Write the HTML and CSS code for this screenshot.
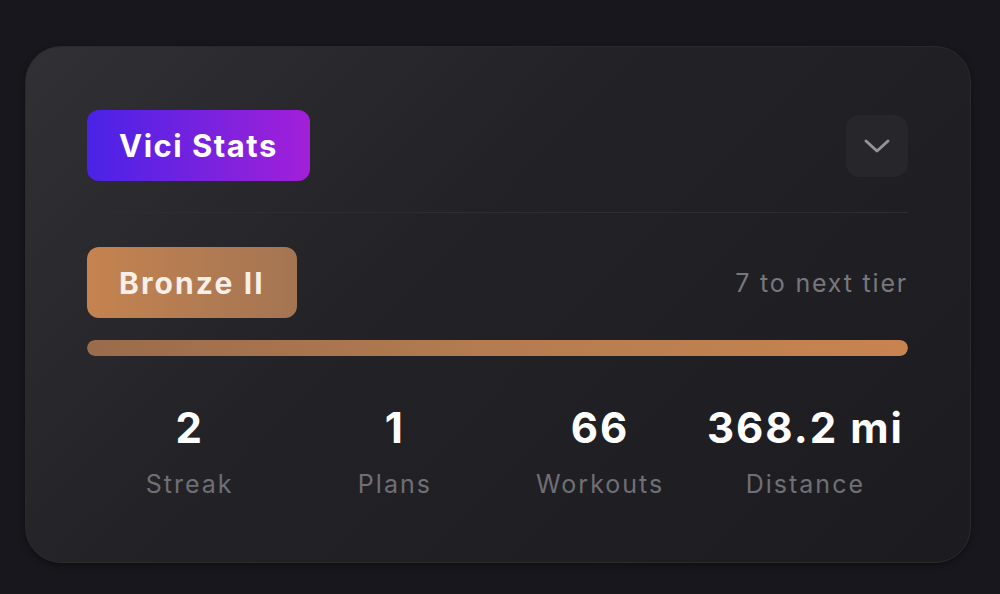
FILE: index.html
```html
<!DOCTYPE html>
<html lang="en">
<head>
    <meta charset="UTF-8">
    <meta name="viewport" content="width=device-width, initial-scale=1.0">
    <title>Vici Stats</title>
    <link rel="stylesheet" href="styles.css">
</head>
<body>
    <div class="card">
        <div class="card-header">
            <span class="brand-badge">Vici Stats</span>
            <button class="toggle" type="button" aria-label="Collapse">
                <svg width="28" height="16" viewBox="0 0 28 16" fill="none">
                    <path d="M3 3l11 10L25 3" stroke="#939399" stroke-width="3" stroke-linecap="round" stroke-linejoin="round"/>
                </svg>
            </button>
        </div>

        <div class="tier-row">
            <span class="tier-badge">Bronze II</span>
            <span class="tier-next">7 to next tier</span>
        </div>
        <div class="progress">
            <div class="progress-fill" style="width: 100%"></div>
        </div>

        <div class="stats">
            <div class="stat">
                <div class="stat-value">2</div>
                <div class="stat-label">Streak</div>
            </div>
            <div class="stat">
                <div class="stat-value">1</div>
                <div class="stat-label">Plans</div>
            </div>
            <div class="stat">
                <div class="stat-value">66</div>
                <div class="stat-label">Workouts</div>
            </div>
            <div class="stat">
                <div class="stat-value">368.2 mi</div>
                <div class="stat-label">Distance</div>
            </div>
        </div>
    </div>
</body>
</html>
```

FILE: styles.css
```css
body {
    margin: 0;
    padding: 46px 29px 0 25px;
    background-color: #17171d;
    font-family: Inter, "Noto Sans", sans-serif;
    height: 594px;
    box-sizing: border-box;
}
.card {
    height: 517px;
    box-sizing: border-box;
    padding: 63px 62px 0 61px;
    border-radius: 36px;
    background: linear-gradient(135deg, #313135 0%, #232327 40%, #1c1c20 100%);
    border: 1px solid #2a2a2e;
    box-shadow: 0 2px 6px rgba(0, 0, 0, 0.4);
}
.card-header {
    display: flex;
    justify-content: space-between;
    align-items: center;
    padding-bottom: 31px;
    border-bottom: 1px solid #2c2c31;
}
.brand-badge {
    display: inline-flex;
    align-items: center;
    height: 71px;
    padding: 0 32px;
    border-radius: 12px;
    background: linear-gradient(90deg, #4a22e8 0%, #7e22dd 60%, #a31fd9 100%);
    color: #fff;
    font-size: 31px;
    font-weight: 700;
    letter-spacing: 1.5px;
}
.toggle {
    width: 62px;
    height: 62px;
    border: none;
    border-radius: 14px;
    background-color: #26262b;
    display: flex;
    align-items: center;
    justify-content: center;
    padding: 0;
    cursor: pointer;
}
.tier-row {
    display: flex;
    justify-content: space-between;
    align-items: center;
    margin-top: 34px;
}
.tier-badge {
    display: inline-flex;
    align-items: center;
    height: 71px;
    padding: 0 32px;
    border-radius: 12px;
    background: linear-gradient(90deg, #c5834f 0%, #b07a52 60%, #a47552 100%);
    color: #f7efe8;
    font-size: 30px;
    font-weight: 700;
    letter-spacing: 2.1px;
}
.tier-next {
    color: #77777d;
    font-size: 25px;
    letter-spacing: 1.8px;
}
.progress {
    margin-top: 22px;
    height: 16px;
    border-radius: 8px;
    background-color: #2c2c31;
    overflow: hidden;
}
.progress-fill {
    height: 100%;
    border-radius: 8px;
    background: linear-gradient(90deg, #9a6c4b 0%, #b57c50 50%, #c8844f 100%);
}
.stats {
    display: grid;
    grid-template-columns: repeat(4, 1fr);
    margin-top: 47px;
    text-align: center;
}
.stat-value {
    color: #fff;
    font-size: 42px;
    font-weight: 700;
    line-height: 50px;
    letter-spacing: 2px;
}
.stat-label {
    margin-top: 15px;
    color: #6f6f75;
    font-size: 25px;
    line-height: 32px;
    letter-spacing: 2px;
}
```
